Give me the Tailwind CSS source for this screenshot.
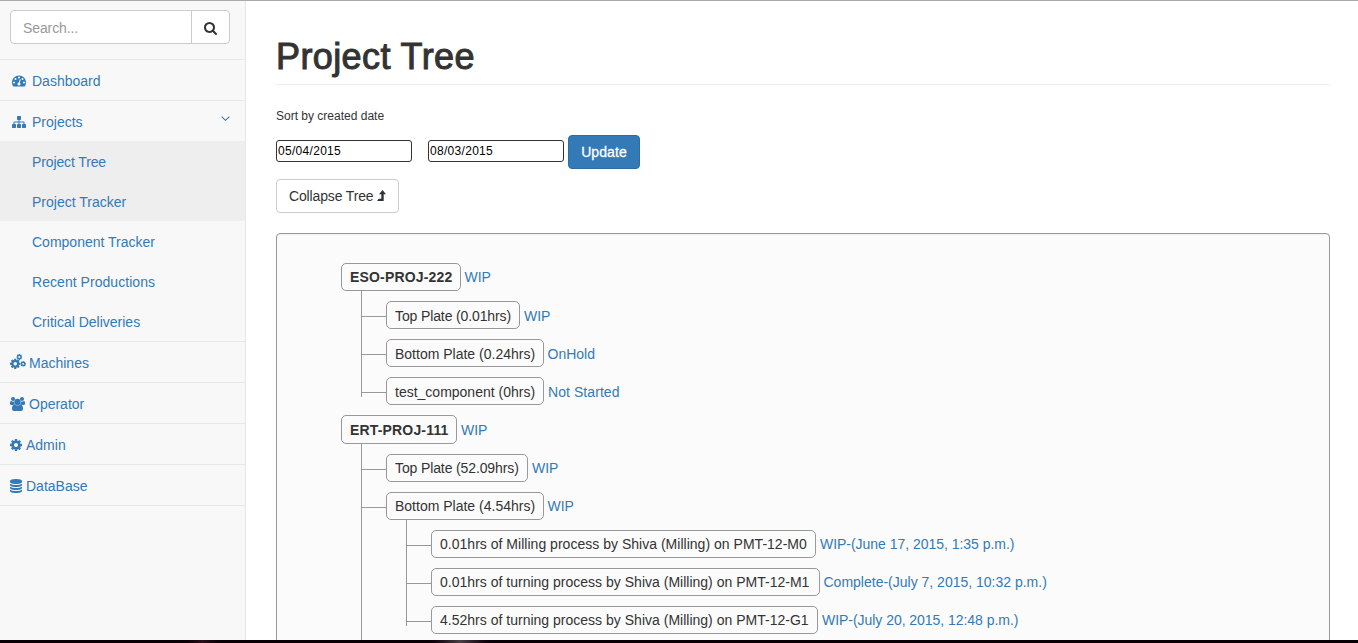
<!DOCTYPE html>
<html lang="en">
<head>
<meta charset="utf-8">
<title>Project Tree</title>
<script src="https://cdn.jsdelivr.net/npm/@tailwindcss/browser@4"></script>
</head>
<body class="h-[643px] overflow-hidden bg-white font-['Liberation_Sans',Arial,sans-serif] text-[14px] leading-5 text-[#333]">
<svg class="hidden">
  <symbol id="cog" viewBox="128 128 1536 1536"><path d="M1152 896q0-106-75-181t-181-75-181 75-75 181 75 181 181 75 181-75 75-181zm512-109v222q0 12-8 23t-20 13l-185 28q-19 54-39 91 35 50 107 138 10 12 10 25t-9 23q-27 37-99 108t-94 71q-12 0-26-9l-138-108q-44 23-91 38-16 136-29 186-7 28-36 28h-222q-14 0-24.5-8.5t-11.5-21.5l-28-184q-49-16-90-37l-141 107q-10 9-25 9-14 0-25-11-126-114-165-168-7-10-7-23 0-12 8-23 15-21 51-66.500t54-70.500q-27-50-41-99l-183-27q-13-2-21-12.500t-8-23.500v-222q0-12 8-23t19-13l186-28q14-46 39-92-40-57-107-138-10-12-10-24 0-10 9-23 26-36 98.500-107.500t94.500-71.500q13 0 26 10l138 107q44-23 91-38 16-136 29-186 7-28 36-28h222q14 0 24.500 8.500t11.500 21.500l28 184q49 16 90 37l142-107q9-9 24-9 13 0 25 10 129 119 165 170 7 8 7 22 0 12-8 23-15 21-51 66.500t-54 70.500q26 50 41 98l183 28q13 2 21 12.500t8 23.500z"/></symbol>
</svg>
<div class="flex h-[640px] overflow-hidden border-t border-[#aaa]">
  <aside class="w-[246px] shrink-0 border-r border-[#e7e7e7] bg-[#f8f8f8] text-[#337ab7]">
    <div class="flex h-[59px] border-b border-[#e7e7e7] pl-[10px] pt-[9px]">
      <div class="flex h-[34px] w-[220px] rounded-[4px] border border-[#ccc] bg-white">
        <div class="w-[181px] border-r border-[#ccc] pl-3 pt-[7px] leading-5 tracking-[-0.1px] text-[#999]">Search...</div>
        <div class="flex flex-1 items-center justify-center pt-[2px]">
          <svg class="size-[13px]" viewBox="64 128 1664 1664" fill="#333"><path d="M1216 832q0-185-131.5-316.5t-316.5-131.5-316.5 131.5-131.5 316.5 131.5 316.5 316.5 131.5 316.5-131.5 131.5-316.5zm512 832q0 52-38 90t-90 38q-54 0-90-38l-343-342q-179 124-399 124-143 0-273.5-55.5t-225-150-150-225-55.5-273.5 55.500-273.500 150-225 225-150 273.500-55.500 273.500 55.500 225 150 150 225 55.500 273.500q0 220-124 399l343 343q37 37 37 90z"/></svg>
        </div>
      </div>
    </div>
    <a class="flex h-[41px] items-center border-b border-[#e7e7e7] pl-3 pt-[2px]"><svg class="mr-[6px] h-[12px] w-[14px]" viewBox="0 256 1792 1408" fill="currentColor"><path d="M384 1152q0-53-37.5-90.5t-90.5-37.5-90.5 37.5-37.5 90.5 37.5 90.5 90.5 37.5 90.5-37.5 37.5-90.5zm192-448q0-53-37.5-90.5t-90.5-37.5-90.5 37.5-37.5 90.5 37.5 90.5 90.5 37.5 90.5-37.5 37.5-90.5zm428 481l101-382q6-26-7.5-48.5t-38.5-29.500-48 6.500-30 39.500l-101 382q-60 5-107 43.500t-63 98.500q-20 77 20 146t117 89 146-20 89-117q16-60-6-117t-72-91zm660-33q0-53-37.500-90.500t-90.500-37.500-90.500 37.500-37.500 90.500 37.500 90.500 90.500 37.500 90.500-37.500 37.500-90.500zm-640-640q0-53-37.500-90.500t-90.500-37.500-90.500 37.500-37.500 90.500 37.500 90.500 90.500 37.500 90.500-37.500 37.500-90.500zm448 192q0-53-37.500-90.500t-90.500-37.500-90.500 37.500-37.500 90.500 37.500 90.500 90.500 37.500 90.500-37.500 37.500-90.500zm320 448q0 261-141 483-19 29-54 29h-1402q-35 0-54-29-141-221-141-483 0-182 71-348t191-286 286-191 348-71 348 71 286 191 191 286 71 348z"/></svg>Dashboard</a>
    <a class="flex h-[40px] items-center pl-3 pt-[2px]"><svg class="mr-[6px] h-[12px] w-[14px]" viewBox="0 128 1792 1536" fill="currentColor"><path d="M1792 1248v320q0 40-28 68t-68 28h-320q-40 0-68-28t-28-68v-320q0-40 28-68t68-28h96v-192h-512v192h96q40 0 68 28t28 68v320q0 40-28 68t-68 28h-320q-40 0-68-28t-28-68v-320q0-40 28-68t68-28h96v-192h-512v192h96q40 0 68 28t28 68v320q0 40-28 68t-68 28h-320q-40 0-68-28t-28-68v-320q0-40 28-68t68-28h96v-192q0-52 38-90t90-38h512v-192h-96q-40 0-68-28t-28-68v-320q0-40 28-68t68-28h320q40 0 68 28t28 68v320q0 40-28 68t-68 28h-96v192h512q52 0 90 38t38 90v192h96q40 0 68 28t28 68z"/></svg>Projects<svg class="mb-[7px] ml-auto mr-[15px] h-[5px] w-[9px]" viewBox="0 0 9 5" fill="none" stroke="currentColor" stroke-width="1.1"><path d="M.6.6 4.500 4.300 8.400.6"/></svg></a>
    <nav class="flex flex-col border-b border-[#e7e7e7]">
      <a class="h-10 bg-[#eee] pl-8 pt-[11px] tracking-[-0.12px]">Project Tree</a>
      <a class="h-10 bg-[#eee] pl-8 pt-[11px]">Project Tracker</a>
      <a class="h-10 pl-8 pt-[11px]">Component Tracker</a>
      <a class="h-10 pl-8 pt-[11px] tracking-[0.05px]">Recent Productions</a>
      <a class="h-10 pl-8 pt-[11px]">Critical Deliveries</a>
    </nav>
    <a class="flex h-[41px] items-center border-b border-[#e7e7e7] pl-[10px] pt-[2px]"><svg class="mb-[2px] mr-[3px] size-4" fill="currentColor" viewBox="0 0 16 16"><use href="#cog" x="0" y="4.500" width="10.500" height="10.500"/><use href="#cog" x="6.300" y="0" width="6" height="6"/><use href="#cog" x="10.300" y="7" width="5.700" height="5.700"/></svg>Machines</a>
    <a class="flex h-[41px] items-center border-b border-[#e7e7e7] pl-[10px] pt-[2px]"><svg class="mr-[4px] h-[14px] w-[15px]" fill="currentColor" viewBox="0 0 15 14"><circle cx="3" cy="2" r="2"/><circle cx="12" cy="2" r="2"/><circle cx="7.500" cy="5" r="3.200"/><path d="M0 7V5.500Q0 4 1 4 3 5 4.200 4.500 4 6 4.900 7.200 3.500 7.300 2.800 8H1.500Q0 8 0 7zM15 7V5.500Q15 4 14 4 12 5 10.800 4.500 11 6 10.100 7.200 11.500 7.300 12.200 8H13.500Q15 8 15 7zM4.500 7.600Q7.500 9.400 10.500 7.600 13 7.800 13 12 13 14 11 14H4Q2 14 2 12 2 7.800 4.500 7.600z"/></svg>Operator</a>
    <a class="flex h-[41px] items-center border-b border-[#e7e7e7] pl-[10px] pt-[2px]"><svg class="mr-[4px] size-[12px]" fill="currentColor"><use href="#cog"/></svg>Admin</a>
    <a class="flex h-[41px] items-center border-b border-[#e7e7e7] pl-[10px] pt-[2px]"><svg class="mr-[4px] h-[14px] w-[12px]" viewBox="128 0 1536 1792" preserveAspectRatio="none" fill="currentColor"><path d="M896 768q237 0 443-43t325-127v170q0 69-103 128t-280 93.500-385 34.500-385-34.500-280-93.500-103-128v-170q119 84 325 127t443 43zm0 768q237 0 443-43t325-127v170q0 69-103 128t-280 93.500-385 34.500-385-34.500-280-93.500-103-128v-170q119 84 325 127t443 43zm0-384q237 0 443-43t325-127v170q0 69-103 128t-280 93.500-385 34.500-385-34.500-280-93.500-103-128v-170q119 84 325 127t443 43zm0-1152q208 0 385 34.500t280 93.500 103 128v128q0 69-103 128t-280 93.500-385 34.500-385-34.500-280-93.500-103-128v-128q0-69 103-128t280-93.500 385-34.500z"/></svg>DataBase</a>
  </aside>
  <main class="flex-1 pl-[30px] pr-[28px]">
    <h1 class="h-[84px] border-b border-[#eee] pt-[36px] text-[36px] leading-10 tracking-[0.4px] [-webkit-text-stroke:1px_#333]">Project Tree</h1>
    <p class="pt-[21px] text-[12px] leading-5">Sort by created date</p>
    <div class="flex pt-[9px]">
      <div class="mt-[5px] h-[22px] w-[136px] rounded-[3px] border border-[#333] pl-px text-[12px] leading-5 tracking-[0.3px] text-black">05/04/2015</div>
      <div class="ml-4 mt-[5px] h-[22px] w-[136px] rounded-[3px] border border-[#333] pl-px text-[12px] leading-5 tracking-[0.3px] text-black">08/03/2015</div>
      <button class="ml-1 h-[34px] w-[72px] rounded-[4px] border border-[#2e6da4] bg-[#337ab7] tracking-[0.1px] text-white [-webkit-text-stroke:0.3px_#fff]">Update</button>
    </div>
    <button class="mt-[10px] flex h-[34px] w-[123px] items-center rounded-[4px] border border-[#ccc] pl-3"><span class="tracking-[-0.15px]">Collapse Tree</span><svg class="ml-[4px] h-[12px] w-[9px]" viewBox="0 0 9 12" fill="#333"><path d="M5.500 0 9 4.200H6.700V11H0L1.700 8.800H4.300V4.200H2z"/></svg></button>
    <section class="mt-5 h-[500px] rounded-[4px] border border-[#999] bg-[#fbfbfb] pl-16 pt-[29px] shadow-[inset_0_1px_1px_rgba(0,0,0,0.05)]">
      <div class="flex h-7"><b class="h-7 w-[120px] rounded-[5px] border border-[#999] pl-2 leading-[27px] tracking-[0.17px]">ESO-PROJ-222</b><a class="ml-[3.500px] leading-7 text-[#337ab7]">WIP</a></div>
      <ul class="pl-5">
        <li class="flex h-[38px]"><i class="h-[38px] w-[25px] border-l border-[#999]"><i class="block h-[26px] border-b border-[#999]"></i></i><div class="flex pt-[10px]"><span class="h-7 w-[134px] rounded-[5px] border border-[#999] pl-2 leading-7 tracking-[-0.12px]">Top Plate (0.01hrs)</span><a class="ml-1 leading-[30px] text-[#337ab7]">WIP</a></div></li>
        <li class="flex h-[38px]"><i class="h-[38px] w-[25px] border-l border-[#999]"><i class="block h-[26px] border-b border-[#999]"></i></i><div class="flex pt-[10px]"><span class="h-7 w-[158px] rounded-[5px] border border-[#999] pl-2 leading-7">Bottom Plate (0.24hrs)</span><a class="ml-[3.500px] leading-[30px] text-[#337ab7]">OnHold</a></div></li>
        <li class="flex h-[38px]"><i class="h-[30px] w-[25px] border-l border-[#999]"><i class="block h-[26px] border-b border-[#999]"></i></i><div class="flex pt-[10px]"><span class="h-7 w-[158px] rounded-[5px] border border-[#999] pl-2 leading-7">test_component (0hrs)</span><a class="ml-1 leading-[30px] tracking-[0.07px] text-[#337ab7]">Not Started</a></div></li>
      </ul>
      <div class="flex h-[39px] pt-[10px]"><b class="h-[29px] w-[116px] rounded-[5px] border border-[#999] pl-2 leading-7 tracking-[0.17px]">ERT-PROJ-111</b><a class="ml-1 leading-[30px] text-[#337ab7]">WIP</a></div>
      <ul class="pl-5">
        <li class="flex h-[38px]"><i class="h-[38px] w-[25px] border-l border-[#999]"><i class="block h-[26px] border-b border-[#999]"></i></i><div class="flex pt-[10px]"><span class="h-7 w-[142px] rounded-[5px] border border-[#999] pl-2 leading-[26px] tracking-[-0.12px]">Top Plate (52.09hrs)</span><a class="ml-1 leading-7 text-[#337ab7]">WIP</a></div></li>
        <li class="flex"><i class="w-[25px] border-l border-[#999]"><i class="block h-[26px] border-b border-[#999]"></i></i>
          <div class="h-[200px]">
            <div class="flex h-[38px] pt-[10px]"><span class="h-7 w-[158px] rounded-[5px] border border-[#999] pl-2 leading-[26px]">Bottom Plate (4.54hrs)</span><a class="ml-[3.500px] leading-7 text-[#337ab7]">WIP</a></div>
            <ul class="pl-5">
              <li class="flex h-[38px]"><i class="h-[38px] w-[25px] border-l border-[#999]"><i class="block h-[26px] border-b border-[#999]"></i></i><div class="flex pt-[10px]"><span class="h-7 w-[385px] rounded-[5px] border border-[#999] pl-2 leading-[26px] tracking-[0.02px]">0.01hrs of Milling process by Shiva (Milling) on PMT-12-M0</span><a class="ml-1 leading-7 tracking-[-0.03px] text-[#337ab7]">WIP-(June 17, 2015, 1:35 p.m.)</a></div></li>
              <li class="flex h-[38px]"><i class="h-[38px] w-[25px] border-l border-[#999]"><i class="block h-[26px] border-b border-[#999]"></i></i><div class="flex pt-[10px]"><span class="h-7 w-[389px] rounded-[5px] border border-[#999] pl-2 leading-[26px] tracking-[0.01px]">0.01hrs of turning process by Shiva (Milling) on PMT-12-M1</span><a class="ml-[3.500px] leading-7 text-[#337ab7]">Complete-(July 7, 2015, 10:32 p.m.)</a></div></li>
              <li class="flex h-[38px]"><i class="h-[30px] w-[25px] border-l border-[#999]"><i class="block h-[26px] border-b border-[#999]"></i></i><div class="flex pt-[10px]"><span class="h-7 w-[387px] rounded-[5px] border border-[#999] pl-2 leading-[26px] tracking-[0.01px]">4.52hrs of turning process by Shiva (Milling) on PMT-12-G1</span><a class="ml-1 leading-7 tracking-[-0.04px] text-[#337ab7]">WIP-(July 20, 2015, 12:48 p.m.)</a></div></li>
            </ul>
          </div>
        </li>
      </ul>
    </section>
  </main>
</div>
<footer class="flex h-[3px] bg-[#080004]"><i class="ml-[185px] h-[3px] w-[35px] bg-linear-to-r from-[#080004] via-[#2a1018] to-[#080004]"></i><i class="ml-[210px] h-[3px] w-[60px] bg-linear-to-r from-[#080004] via-[#4a4045] to-[#080004]"></i></footer>
</body>
</html>
